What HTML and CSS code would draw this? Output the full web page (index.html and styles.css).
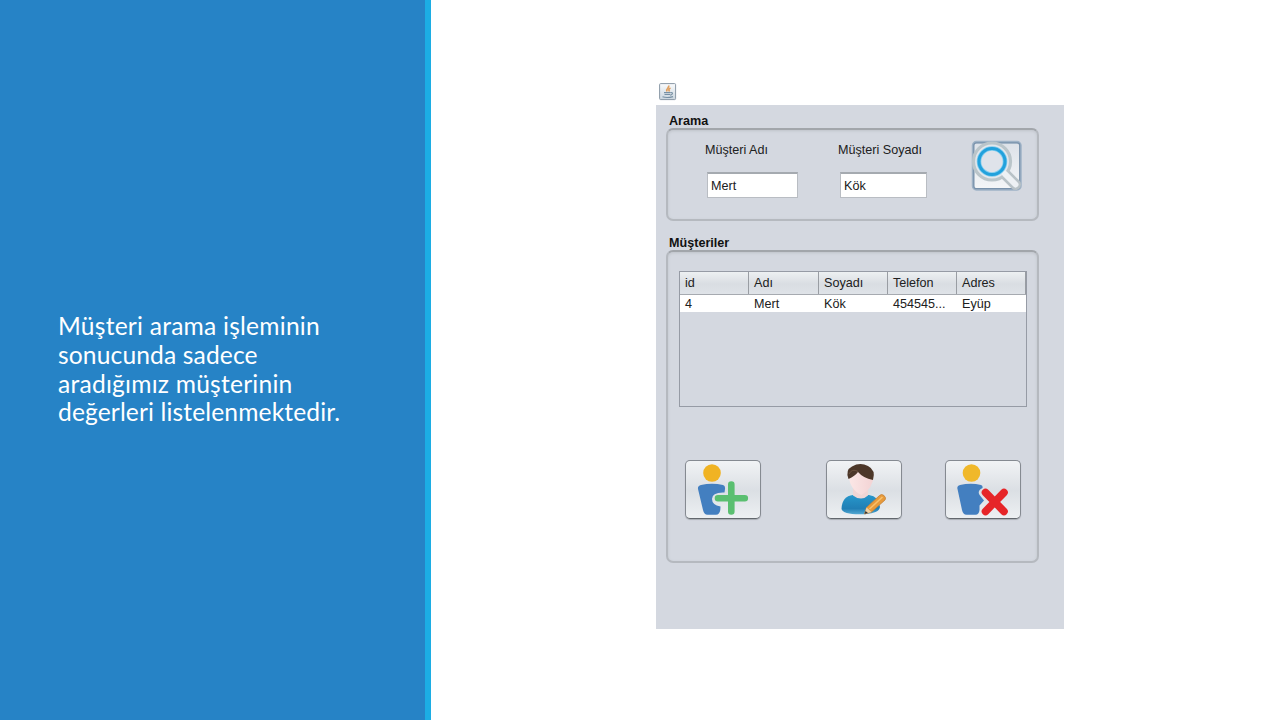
FILE: index.html
```html
<!DOCTYPE html>
<html lang="tr">
<head>
<meta charset="utf-8">
<title>Müşteri Arama</title>
<link rel="stylesheet" href="styles.css">
</head>
<body>
<div class="slide">
  <aside class="caption">
    <p><span class="l1">Müşteri arama işleminin</span><span class="l2">sonucunda sadece</span><span class="l3">aradığımız müşterinin</span><span class="l4">değerleri listelenmektedir.</span></p>
  </aside>
  <main class="window">
    <header class="titlebar">
      <svg width="18" height="18" viewBox="0 0 18 18">
        <defs><linearGradient id="j" x1="0" y1="0" x2="0" y2="1"><stop offset="0" stop-color="#fafbfc"/><stop offset="1" stop-color="#cbd6df"/></linearGradient></defs>
        <rect x=".6" y=".6" width="16" height="16" rx="1" fill="url(#j)" stroke="#8998a5"/>
        <path d="M9.500 2.500c1.500 2.200-3 2.800-1.500 6M11.500 5c-1.800.8-2.200 1.800-.9 3.600" fill="none" stroke="#e0a060" stroke-width="1.700"/>
        <path d="M5 9.700h6.500M5.500 11.500h5.500M3.500 13.800c3 1 7 .8 10.500-.2M11.700 9.500c2.700-.3 2 2.300-.6 2.600" fill="none" stroke="#7890a4" stroke-width="1.200"/>
      </svg>
    </header>
    <div class="content">
      <h2 class="title">Arama</h2>
      <section class="group search">
        <label class="first"><span class="lab">Müşteri Adı</span><span class="field">Mert</span></label>
        <label class="second"><span class="lab">Müşteri Soyadı</span><span class="field">Kök</span></label>
        <svg class="find" width="52" height="52" viewBox="0 0 52 52">
          <defs><linearGradient id="f" x1="0" y1="0" x2="0" y2="1"><stop offset="0" stop-color="#dce1e8"/><stop offset="1" stop-color="#f4f6f8"/></linearGradient></defs>
          <rect x="2" y="2" width="47.500" height="47.500" rx="3.500" fill="url(#f)" stroke="#9eb2c6" stroke-width="2.500"/>
          <rect x="2.800" y="2.800" width="45.900" height="45.900" rx="2.500" fill="none" stroke="#7891ab" stroke-width="1.200"/>
          <path d="M34 34L44.500 44.500" stroke="#b8c2c7" stroke-width="11" stroke-linecap="round"/>
          <circle cx="21" cy="21.500" r="18.500" fill="#e3e7ec" stroke="#bac5ca" stroke-width="3.200"/>
          <path d="M34 34L44.500 44.500" stroke="#edf1f4" stroke-width="6" stroke-linecap="round"/>
          <circle cx="21" cy="21.500" r="13" fill="#dfe3ea" stroke="#80cdef" stroke-width="4.600"/>
          <circle cx="21" cy="21.500" r="13" fill="none" stroke="#22a1dc" stroke-width="3"/>
        </svg>
      </section>
      <h2 class="title lower">Müşteriler</h2>
      <section class="group customers">
        <div class="table">
          <div class="row head"><span>id</span><span>Adı</span><span>Soyadı</span><span>Telefon</span><span>Adres</span></div>
          <div class="row"><span>4</span><span>Mert</span><span>Kök</span><span>454545...</span><span>Eyüp</span></div>
        </div>
        <div class="actions">
          <button class="add" aria-label="Ekle"><svg width="74" height="57" viewBox="0 0 74 57">
            <circle cx="26" cy="12" r="8.800" fill="#f0b323"/>
            <path d="M12 28Q11.500 24.800 15 24Q26 21.500 37 24Q39.500 24.500 39 28L38.500 31.500Q26 31 26 38Q26 44 34.500 45.500L34.300 49Q33.500 53.500 30 53.800H21.500Q18 53.500 17 49Z" fill="#437fc0"/>
            <path d="M45.300 23.500V50.500M32 37.200H58.800" stroke="#5abf70" stroke-width="6.600" stroke-linecap="round"/>
          </svg></button>
          <button class="edit" aria-label="Düzenle"><svg width="74" height="57" viewBox="0 0 74 57">
            <defs>
              <linearGradient id="b" x1="0" y1="0" x2="0" y2="1"><stop offset="0" stop-color="#2797cb"/><stop offset=".7" stop-color="#217fb5"/><stop offset="1" stop-color="#54a9d2"/></linearGradient>
              <linearGradient id="s" x1="0" y1="0" x2="1" y2="0"><stop offset="0" stop-color="#fbe7e6"/><stop offset="1" stop-color="#f3d3d4"/></linearGradient>
            </defs>
            <path d="M14.500 48Q15 35 26 34H42Q52 35.500 53 46Q52 53 34 53.300Q16 53.500 14.500 48Z" fill="url(#b)"/>
            <path d="M26 27H41V34.500Q38 37.500 34 37.500Q29.500 37.500 26 34.500Z" fill="#f0d6d5"/>
            <path d="M22 14Q23 8 34 8Q45 8 46.500 14Q46.500 27 34.500 34Q22 28 22 14Z" fill="url(#s)"/>
            <path d="M21.500 18Q18 9 25 5.500Q33 1 41 5Q49 9 46 19Q36 17 31 11Q28 15 21.500 18Z" fill="#4c3729"/>
            <path d="M31 10.500Q25 7 22 13" stroke="#6c513e" stroke-width="1" fill="none"/>
            <path d="M37.500 53L39.500 46.500L52.500 34.500Q54.500 32.500 57 34.500Q59.500 37 58 39L44.500 51Z" fill="#e79a3b" stroke="#c38139" stroke-width=".8"/>
            <path d="M42.500 48L55.500 36" stroke="#f9c16c" stroke-width="1.600"/>
            <path d="M37.500 53L39.500 46.500L44.500 51Z" fill="#f0d1a4"/><path d="M37.500 53L38.500 50L41 52Z" fill="#333"/>
          </svg></button>
          <button class="delete" aria-label="Sil"><svg width="74" height="57" viewBox="0 0 74 57">
            <circle cx="25.500" cy="12" r="8.800" fill="#f0b82a"/>
            <path d="M11.500 28Q10.500 24.800 14 24Q25 21.500 35 24Q37 24.500 36.500 27Q30.500 30 34 34.500L38 39.500L33.500 44.500V49Q33 53.500 29.500 53.800H20.500Q17 53.500 16 49Z" fill="#437fc0"/>
            <path d="M39.500 31.500L58 50.500M58 31.500L39.500 50.500" stroke="#e62528" stroke-width="7.600" stroke-linecap="round"/>
          </svg></button>
        </div>
      </section>
    </div>
  </main>
</div>
</body>
</html>
```
FILE: styles.css
```css
* { box-sizing: border-box; }
body { margin: 0; background: #fff; }
.slide { display: flex; width: 1280px; height: 720px; overflow: hidden; }
.caption {
  flex: none; width: 431px; background: #2683c6;
  border-right: 6px solid #1cade4; padding: 312px 0 0 58px;
}
.caption p { margin: 0; color: #fff; font: 24.6px/28.8px Lato, "Open Sans", sans-serif; }
.caption span { display: block; white-space: nowrap; letter-spacing: .13px; }
.caption .l1, .caption .l3 { letter-spacing: .23px; }
.window { width: 408px; margin: 82px 0 0 225px; font: 12.6px "Liberation Sans", Arial, sans-serif; color: #202020; }
.titlebar { height: 23px; padding: 1px 0 0 3px; }
.titlebar svg { display: block; }
.content { height: 524px; background: #d4d8e0; padding: 8px 25px 0 10px; }
.title { margin: 0 0 0 3px; height: 15px; font-size: 12.6px; line-height: 16px; color: #111; }
.lower { margin-top: 14px; }
.group {
  width: 373px; border: 2px solid #b5b9bf; border-top-color: #a2a6ab; border-radius: 7px;
  box-shadow: inset 0 1px 3px #bfc3ca;
}
.search { height: 93px; display: flex; align-items: flex-start; padding: 12px 0 0 37px; }
.search label { display: block; }
.first { width: 133px; }
.second { width: 132px; }
.lab { display: block; height: 16px; line-height: 16px; white-space: nowrap; }
.field {
  display: block; height: 26px; margin: 14px 0 0 2px; padding: 0 3px; line-height: 25px;
  background: #fff; border: 1px solid #b9bdc3; border-top: 2px solid #a5aab0;
}
.first .field { width: 91px; }
.second .field { width: 87px; }
.find { margin: -2px 0 0 1px; }
.customers { height: 313px; padding: 19px 10px 0 11px; }
.table { width: 348px; height: 136px; border: 1px solid #969ba5; }
.row { display: grid; grid-template-columns: 69px 70px 69px 69px 1fr; height: 17px; line-height: 19px; background: #fff; }
.row span { padding-left: 5px; white-space: nowrap; }
.head { height: 23px; line-height: 22px; background: linear-gradient(#edf0f2, #d9dde2 55%, #dfe3e8); border-bottom: 1px solid #a6aab0; }
.head span { border-right: 1px solid #999da3; }
.actions { display: flex; padding: 53px 0 0 6px; }
button {
  width: 76px; height: 59px; padding: 0; border: 1px solid #858a91; border-bottom-color: #62676d;
  border-radius: 5px; background: linear-gradient(#f1f3f5, #dbdfe4 52%, #edf0f2);
  box-shadow: 0 1px 1px #a8adb3;
}
button svg { display: block; }
.edit { margin-left: 65px; }
.delete { margin-left: 43px; }
```
